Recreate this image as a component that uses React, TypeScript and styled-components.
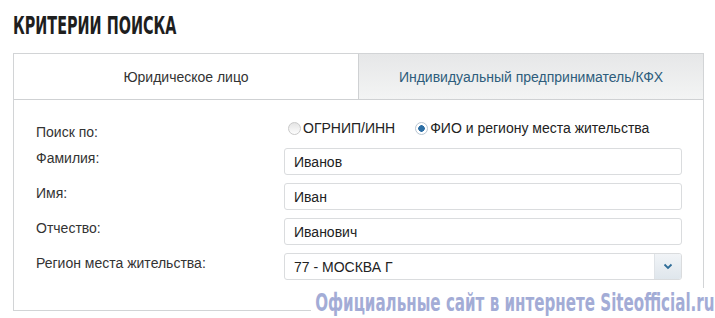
import styled, { createGlobalStyle } from "styled-components";

const GlobalStyle = createGlobalStyle`
  body {
    margin: 0;
    background: #fff;
    font-family: "Liberation Sans", Arial, sans-serif;
  }
`;

const Page = styled.div`
  position: relative;
  width: 715px;
  height: 318px;
  padding: 13px 11px 0 13px;
  box-sizing: border-box;
  overflow: hidden;
`;

const Title = styled.h1`
  margin: 0;
  height: 26px;
  font-family: "DejaVu Sans Condensed", "DejaVu Sans", sans-serif;
  font-weight: bold;
  font-size: 25px;
  line-height: 26px;
  color: #1e1e1e;
  white-space: nowrap;
  transform: scaleX(0.64);
  transform-origin: left center;
`;

const Panel = styled.div`
  margin-top: 14px;
  width: 691px;
  border: 1px solid #d2d4d6;
  box-sizing: border-box;
`;

const Tabs = styled.div`
  display: flex;
  height: 45px;
  border-bottom: 1px solid #cfd1d3;
`;

const Tab = styled.div<{ $active?: boolean }>`
  flex: 1;
  display: flex;
  align-items: center;
  justify-content: center;
  font-size: 14px;
  color: ${(p) => (p.$active ? "#333" : "#2e5d7c")};
  background: ${(p) =>
    p.$active ? "#fff" : "linear-gradient(#e6e7e8, #f3f4f4)"};
  & + & {
    border-left: 1px solid #cfd1d3;
  }
`;

const Form = styled.div`
  display: grid;
  grid-template-columns: 248px 398px;
  row-gap: 8px;
  padding: 17px 0 30px 22px;
`;

const Label = styled.div<{ $offset?: number }>`
  font-size: 14px;
  line-height: 16px;
  color: #333;
  padding-top: ${(p) => p.$offset ?? 2}px;
`;

const Radios = styled.div`
  display: flex;
  align-items: center;
  height: 22px;
  margin-left: 4px;
  font-size: 14px;
  color: #222;
`;

const RadioItem = styled.label`
  display: flex;
  align-items: center;
  gap: 2px;
  margin-right: 20px;
  white-space: nowrap;
`;

const RadioDot = styled.span<{ $checked?: boolean }>`
  width: 13px;
  height: 13px;
  border-radius: 50%;
  box-sizing: border-box;
  border: 1px solid ${(p) => (p.$checked ? "#b9c6d2" : "#c9c9c9")};
  background: ${(p) =>
    p.$checked
      ? "radial-gradient(circle, #2c6ea4 0 3px, #fff 3.5px)"
      : "linear-gradient(#e4e4e4, #fdfdfd)"};
`;

const Field = styled.div`
  height: 27px;
  box-sizing: border-box;
  border: 1px solid #dadcde;
  border-radius: 3px;
  display: flex;
  align-items: center;
  padding-left: 9px;
  font-size: 14px;
  color: #222;
  background: #fff;
`;

const Select = styled(Field)`
  padding-right: 0;
  justify-content: space-between;
  overflow: hidden;
`;

const Arrow = styled.div`
  width: 26px;
  height: 100%;
  border-left: 1px solid #dfe3e7;
  background: linear-gradient(#f1f4f7, #dfe6ec);
  display: flex;
  align-items: center;
  justify-content: center;
`;

const Watermark = styled.div`
  position: absolute;
  right: 0;
  bottom: 0;
  width: 404px;
  height: 30px;
  background: #fff;
  overflow: hidden;
`;

const WatermarkText = styled.span`
  display: inline-block;
  font-family: "DejaVu Sans Condensed", "DejaVu Sans", sans-serif;
  font-weight: bold;
  font-size: 24px;
  line-height: 30px;
  color: #a3acd6;
  white-space: nowrap;
  transform: scaleX(0.7);
  transform-origin: left center;
  padding-left: 6px;
`;

export default function App() {
  return (
    <>
      <GlobalStyle />
      <Page>
        <Title>КРИТЕРИИ ПОИСКА</Title>
        <Panel>
          <Tabs>
            <Tab $active>Юридическое лицо</Tab>
            <Tab>Индивидуальный предприниматель/КФХ</Tab>
          </Tabs>
          <Form>
            <Label $offset={7}>Поиск по:</Label>
            <Radios>
              <RadioItem>
                <RadioDot />
                ОГРНИП/ИНН
              </RadioItem>
              <RadioItem>
                <RadioDot $checked />
                ФИО и региону места жительства
              </RadioItem>
            </Radios>
            <Label>Фамилия:</Label>
            <Field>Иванов</Field>
            <Label>Имя:</Label>
            <Field>Иван</Field>
            <Label>Отчество:</Label>
            <Field>Иванович</Field>
            <Label>Регион места жительства:</Label>
            <Select>
              77 - МОСКВА Г
              <Arrow>
                <svg width="10" height="7" viewBox="0 0 10 7">
                  <path
                    d="M1.5 1.5 L5 5 L8.5 1.5"
                    fill="none"
                    stroke="#2f6d98"
                    strokeWidth="1.8"
                  />
                </svg>
              </Arrow>
            </Select>
          </Form>
        </Panel>
        <Watermark>
          <WatermarkText>Официальные сайт в интернете Siteofficial.ru</WatermarkText>
        </Watermark>
      </Page>
    </>
  );
}
